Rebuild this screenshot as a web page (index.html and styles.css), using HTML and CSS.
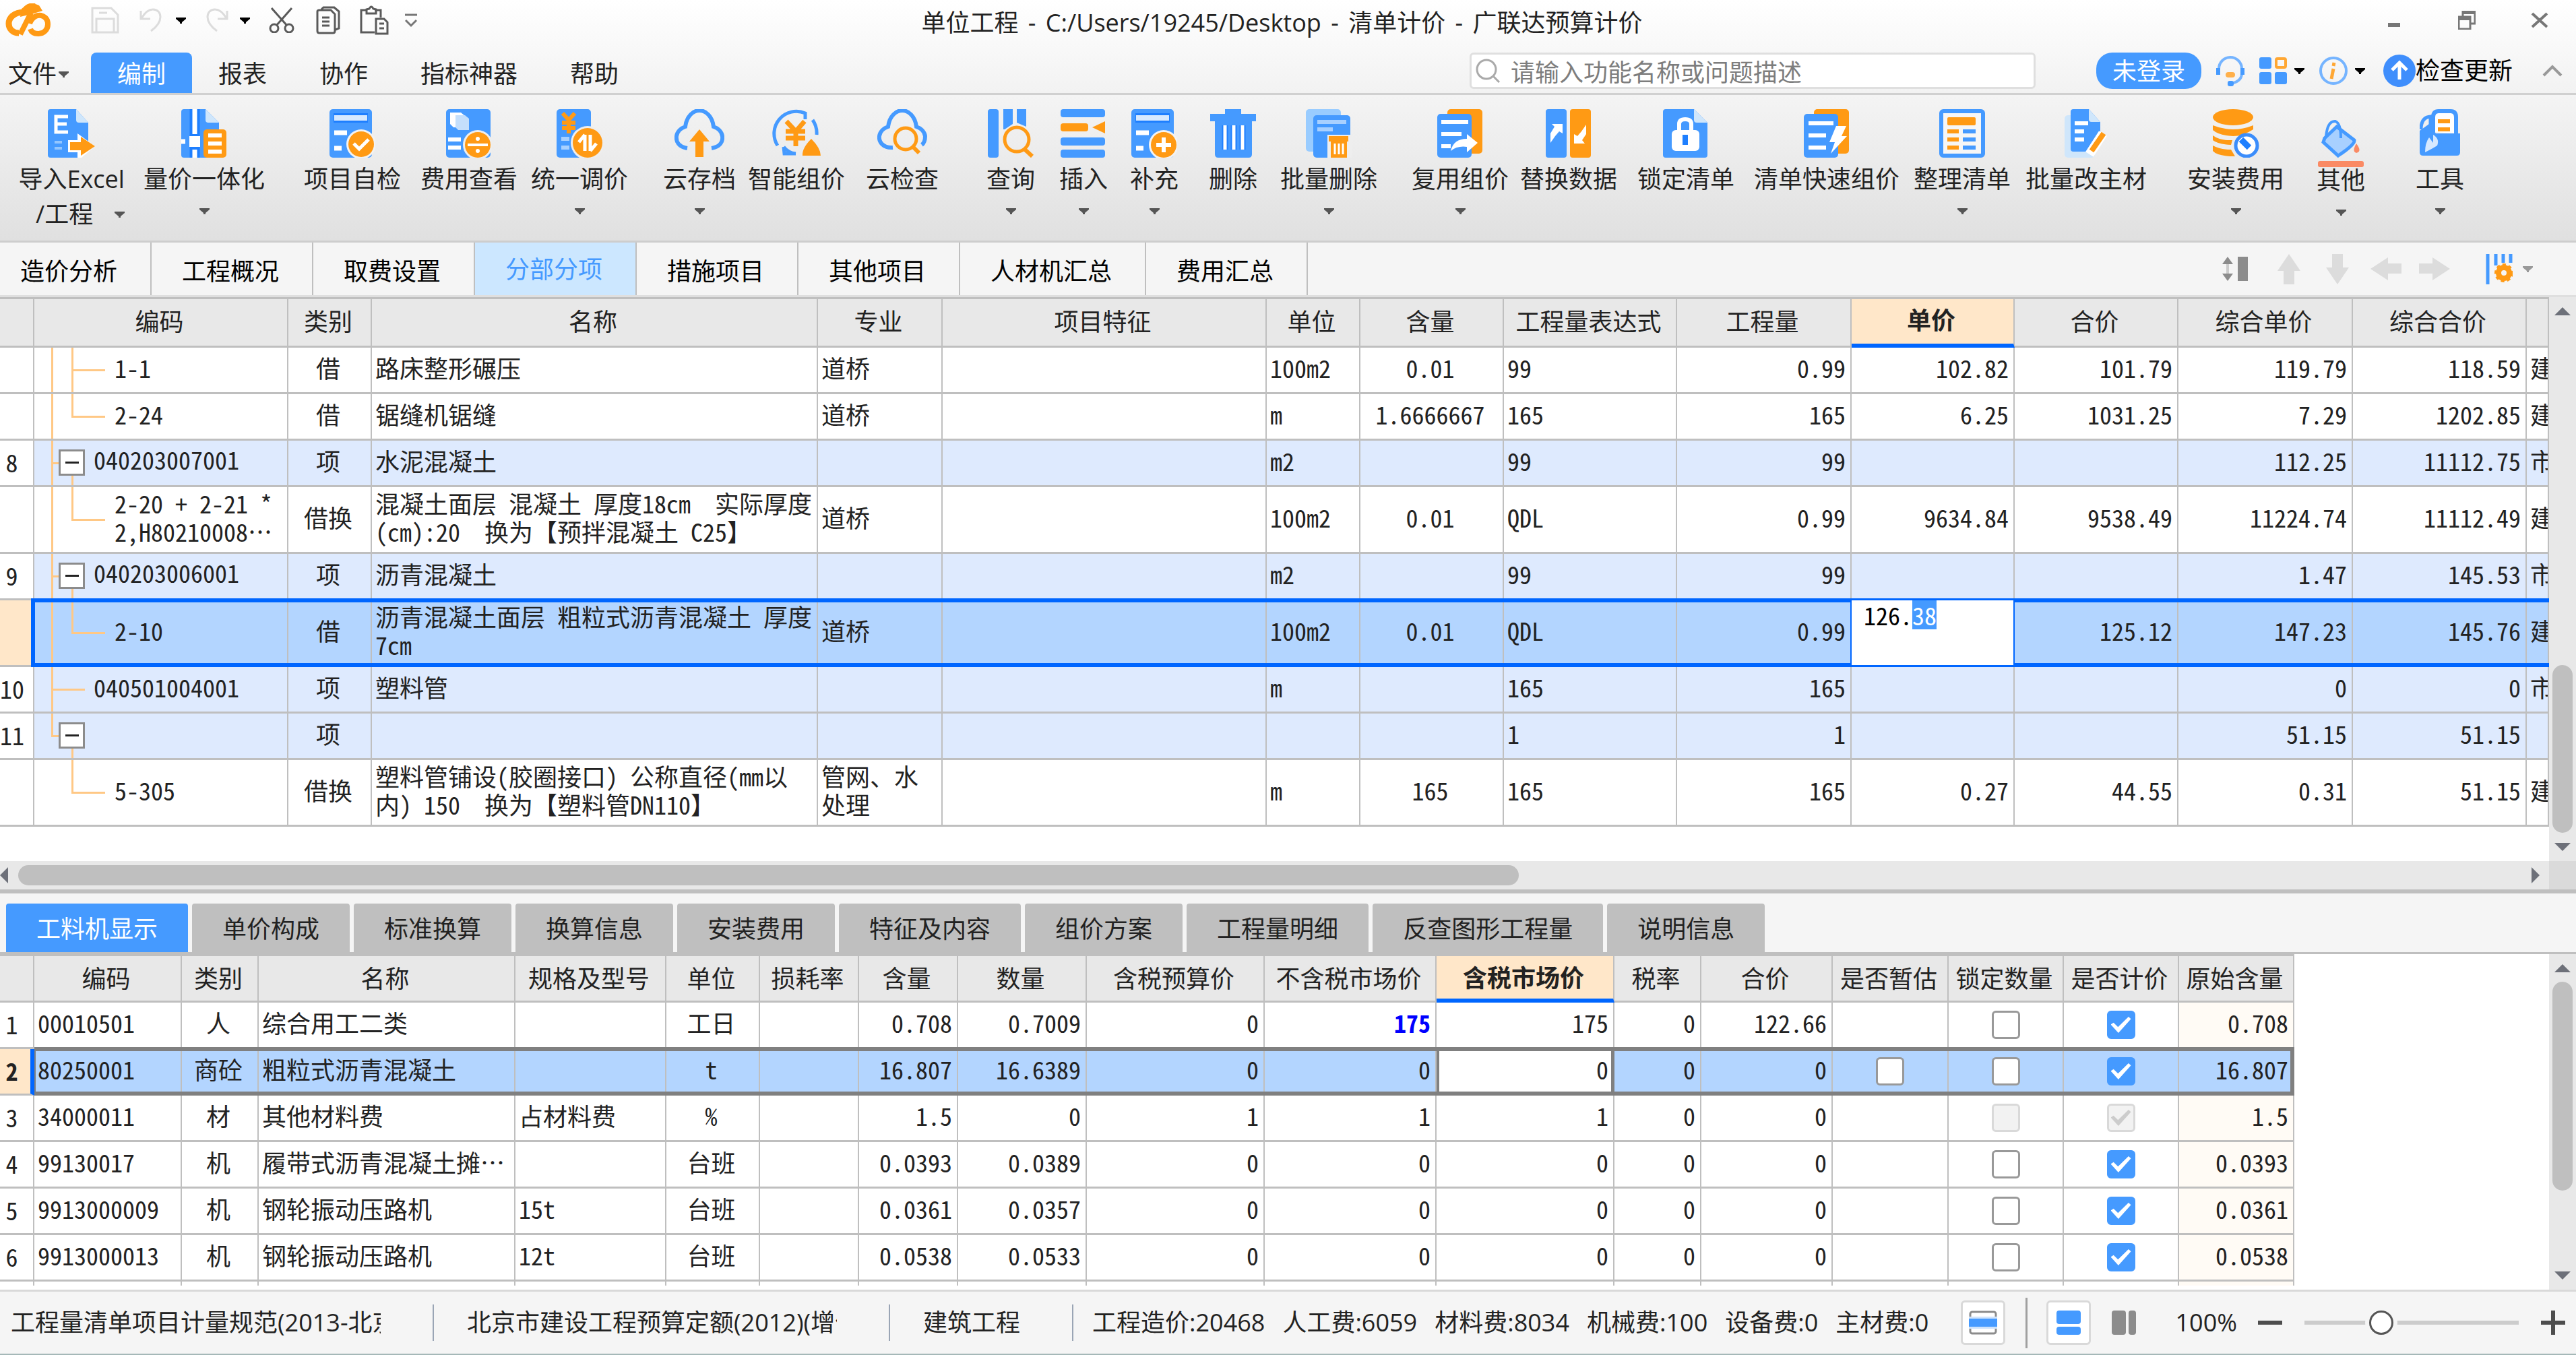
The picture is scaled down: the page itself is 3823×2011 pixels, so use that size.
FILE: index.html
```html
<!DOCTYPE html>
<html lang="zh-CN">
<head>
<meta charset="utf-8">
<title>单位工程 - 清单计价 - 广联达预算计价</title>
<meta name="viewport" content="width=device-width, initial-scale=1">
<link rel="stylesheet" href="styles.css">
<script src="editor.js" defer></script>
</head>
<body>
<svg class="defs" aria-hidden="true">
  <symbol id="caret" viewBox="0 0 15 9"><path d="M0 0H15V2L9 7V9H6V7L0 2Z" fill="currentColor"/></symbol>
  <symbol id="tri" viewBox="0 0 24 12"><path d="M12 0L24 12H0Z" fill="#6d7079"/></symbol>
</svg>

<header class="top">
  <div class="titlebar">
    <div class="quick">
      <svg width="68" height="50" viewBox="0 0 68 50"><g fill="none" stroke="#ff9a14" stroke-width="9"><path d="M44 4C34 3 30 8 28 13C12 13 5 22 5 30C5 38 11 44 20 44"/><path d="M38 14L22 46" stroke-width="8"/><path d="M36 30C40 19 48 17 53 18C60 20 63 25 63 31C63 39 57 45 49 45C41 45 38 41 37 38" stroke-width="8"/></g><path d="M24 8Q38-4 50 3L55 11L42 15L22 20Z" fill="#ff9a14"/></svg>
      <button title="保存"><svg width="42" height="40" viewBox="0 0 42 40"><path d="M2 2H30L40 12V38H2ZM8 38V18H34V38M12 9H24" fill="none" stroke="#dcdcdc" stroke-width="3"/></svg></button>
      <button title="撤销"><svg width="33" height="36" viewBox="0 0 33 36"><path d="M2 4V16H16M3 15C9 5 14 2 20 2C27 2 31 7 31 13C31 22 24 29 17 34" fill="none" stroke="#dcdcdc" stroke-width="3"/></svg></button>
      <button title="撤销列表"><svg width="15" height="9"><use href="#caret"/></svg></button>
      <button title="恢复"><svg width="33" height="36" viewBox="0 0 33 36"><path d="M31 4V16H17M30 15C24 5 19 2 13 2C6 2 2 7 2 13C2 22 9 29 16 34" fill="none" stroke="#dcdcdc" stroke-width="3"/></svg></button>
      <button title="恢复列表"><svg width="15" height="9"><use href="#caret"/></svg></button>
      <button title="剪切"><svg width="38" height="38" viewBox="0 0 38 38"><g fill="none" stroke="#5a5a5a" stroke-width="3"><path d="M4 1L27 27M34 1L11 27"/><circle cx="8" cy="31" r="6"/><circle cx="30" cy="31" r="6"/></g></svg></button>
      <button title="复制"><svg width="36" height="42" viewBox="0 0 36 42"><g fill="none" stroke="#5a5a5a" stroke-width="3"><path d="M2 8Q2 6 5 6H22L28 12V37Q28 40 25 40H5Q2 40 2 37ZM8 5L11 2H27L34 8V33L29 35M9 17H20M9 23H20M9 29H20"/></g></svg></button>
      <button title="粘贴"><svg width="43" height="44" viewBox="0 0 43 44"><g fill="none" stroke="#5a5a5a" stroke-width="3"><path d="M10 7H2V40H22M22 7H31V18M10 12V6L14 5Q17-1 20 5L24 6V12ZM24 20H36L41 25V42H24ZM29 27H36M29 34H36"/></g></svg></button>
      <button title="更多"><svg width="20" height="21" viewBox="0 0 20 21"><path d="M1 2H19M2 10L10 18L18 10" fill="none" stroke="#777" stroke-width="3"/></svg></button>
    </div>
    <h1>单位工程 <span>-</span> C:/Users/19245/Desktop <span>-</span> 清单计价 <span>-</span> 广联达预算计价</h1>
    <div class="window">
      <button title="最小化"><svg width="26" height="28" viewBox="0 0 26 28"><path d="M4 18H22V24H4Z" fill="#777"/></svg></button>
      <button title="还原"><svg width="26" height="28" viewBox="0 0 26 28"><path d="M7 0H25V19H18M7 0V8M1 9H18V27H1Z" fill="none" stroke="#777" stroke-width="3"/><path d="M7 0H26V5H7ZM0 9H19V14H0Z" fill="#777"/></svg></button>
      <button title="关闭"><svg width="26" height="28" viewBox="0 0 26 28"><path d="M2 4L24 24M24 4L2 24" fill="none" stroke="#777" stroke-width="4"/></svg></button>
    </div>
  </div>
  <div class="menubar">
    <nav>
      <button class="file">文件<svg width="15" height="9"><use href="#caret"/></svg></button>
      <button class="on">编制</button><button>报表</button><button>协作</button><button>指标神器</button><button>帮助</button>
    </nav>
    <label class="search"><svg width="36" height="36" viewBox="0 0 36 36"><g fill="none" stroke="#aaa" stroke-width="3"><circle cx="16" cy="16" r="14"/><path d="M26 26L35 35"/></g></svg><input type="text" placeholder="请输入功能名称或问题描述" aria-label="搜索"></label>
    <div class="account">
      <button class="login">未登录</button>
      <button title="客服"><svg width="42" height="46" viewBox="0 0 42 46"><g fill="none" stroke="#459aff" stroke-width="4"><path d="M4 28V20A17 17 0 0 1 38 20V28Q37 39 22 42" stroke="#75b4ff"/><path d="M3 19V29M39 19V29" stroke-width="6"/></g><rect x="14" y="25" width="14" height="8" rx="4" fill="#ffb04a"/><rect x="17" y="38" width="9" height="8" rx="3" fill="#459aff"/></svg></button>
      <button title="应用" class="drop"><svg width="41" height="40" viewBox="0 0 41 40"><g fill="#459aff"><rect width="18" height="17" rx="3"/><rect y="22" width="18" height="18" rx="3"/><rect x="23" y="22" width="18" height="18" rx="3"/></g><rect x="25" y="2" width="14" height="13" rx="2" fill="none" stroke="#ffa733" stroke-width="4"/></svg><svg width="15" height="9"><use href="#caret"/></svg></button>
      <button title="信息" class="drop"><svg width="42" height="46" viewBox="0 0 42 46"><circle cx="21" cy="23" r="19" fill="none" stroke="#75b4ff" stroke-width="4"/><path d="M22 11L21 16M21 20L18 35" stroke="#ffa733" stroke-width="5"/></svg><svg width="15" height="9"><use href="#caret"/></svg></button>
      <button class="update"><svg width="48" height="48" viewBox="0 0 48 48"><circle cx="24" cy="24" r="24" fill="#3f8efc"/><path d="M24 37V14M13 23L24 12L35 23" fill="none" stroke="#fff" stroke-width="5"/></svg>检查更新</button>
      <button title="收起" class="fold"><svg width="30" height="18" viewBox="0 0 30 18"><path d="M2 16L15 3L28 16" fill="none" stroke="#999" stroke-width="4"/></svg></button>
    </div>
  </div>
</header>

<div class="ribbon">
  <button><svg width="70" height="72" viewBox="0 0 70 72"><path d="M0 4Q0 0 4 0H42L60 20V50L45 72H4Q0 72 0 68Z" fill="#459aff"/><path d="M42 0L60 20H46Q42 20 42 16Z" fill="#cfe6fb"/><path d="M30 11H12V34H30M12 22H28" fill="none" stroke="#fff" stroke-width="5"/><path d="M10 49H21M10 58H21" stroke="#94c6ff" stroke-width="4"/><path d="M30 46H44V36L70 55L50 72H44V64H30Z" fill="#fff"/><path d="M33 49H49V41L70 55L49 69V61H33Z" fill="#ff9a14"/></svg><span>导入Excel</span><span class="second">/工程 <svg width="15" height="9"><use href="#caret"/></svg></span></button>
  <button><svg width="68" height="72" viewBox="0 0 68 72"><path d="M0 4Q0 0 4 0H36L56 20V72H4Q0 72 0 68Z" fill="#459aff"/><path d="M36 0L56 20H40Q36 20 36 16Z" fill="#cfe6fb"/><path d="M20 0V72" stroke="#1e7fff" stroke-width="15"/><path d="M20 0V37M20 60V72M0 48H6" stroke="#fff" stroke-width="7"/><rect x="12" y="40" width="16" height="16" fill="#fff"/><rect x="33" y="30" width="34" height="42" rx="5" fill="#ff9a14"/><path d="M40 39H60M40 51H60M40 63H60" stroke="#fff" stroke-width="6"/></svg><span>量价一体化</span><svg width="15" height="9"><use href="#caret"/></svg></button>
  <button><svg width="68" height="72" viewBox="0 0 68 72"><rect width="63" height="72" rx="5" fill="#459aff"/><path d="M6 13H57" stroke="#1e7fff" stroke-width="14"/><path d="M7 13H56" stroke="#d6e9ff" stroke-width="8"/><path d="M7 35H26M7 58H18" stroke="#fff" stroke-width="7"/><circle cx="47" cy="52" r="22" fill="#f3f3f3"/><circle cx="47" cy="52" r="19" fill="#ff9a14"/><path d="M36 51L44 59L58 45" fill="none" stroke="#fff" stroke-width="5"/></svg><span>项目自检</span></button>
  <button><svg width="68" height="72" viewBox="0 0 68 72"><rect width="66" height="72" rx="5" fill="#459aff"/><path d="M6 5H22L28 10V27H11L6 22Z" fill="#fff"/><path d="M14 9H28L34 14V31H18L14 27Z" fill="#c4dffc"/><path d="M3 45H22M3 57H22" stroke="#fff" stroke-width="6"/><circle cx="47" cy="53" r="22" fill="#eee"/><circle cx="47" cy="53" r="19" fill="#ff9a14"/><path d="M32 53H62" stroke="#fff" stroke-width="4"/><circle cx="47" cy="44" r="3" fill="#fff"/><circle cx="47" cy="62" r="3" fill="#fff"/></svg><span>费用查看</span></button>
  <button><svg width="68" height="72" viewBox="0 0 68 72"><rect width="51" height="72" rx="5" fill="#459aff"/><path d="M9 6L18 16L27 6M18 16V36M8 20H28M8 28H28" fill="none" stroke="#ff9a14" stroke-width="6"/><path d="M7 44H19M7 57H19" stroke="#a8d0ff" stroke-width="6"/><circle cx="46" cy="50" r="25" fill="#eee"/><circle cx="46" cy="50" r="22" fill="#ff9a14"/><path d="M42 38V62M42 38L33 49M50 62V38M50 62L59 51" fill="none" stroke="#fff" stroke-width="5"/></svg><span>统一调价</span><svg width="15" height="9"><use href="#caret"/></svg></button>
  <button><svg width="74" height="72" viewBox="0 0 74 72"><path d="M19 58C6 56 2 48 3 40C4 33 10 28 16 26C18 10 28 2 37 2S56 10 58 26C64 28 70 33 71 40C72 48 68 56 55 58" fill="none" stroke="#459aff" stroke-width="6"/><path d="M37 30L52 48H43V71H31V48H22Z" fill="#ff9a14"/></svg><span>云存档</span><svg width="15" height="9"><use href="#caret"/></svg></button>
  <button><svg width="74" height="72" viewBox="0 0 74 72"><g fill="none" stroke="#459aff" stroke-width="5"><path d="M9 54A33 33 0 0 1 50 6L50 15M61 16A34 34 0 0 1 67 38M18 56L19 66H36M18 56Q25 65 36 66"/></g><path d="M22 18L36 33L49 18M36 33V55M21 33H50M21 43H50" fill="none" stroke="#ff9a14" stroke-width="7"/><path d="M59 44Q73 58 73 69H46Q45 58 59 44Z" fill="#ff9a14"/></svg><span>智能组价</span></button>
  <button><svg width="74" height="72" viewBox="0 0 74 72"><path d="M23 57C8 58 2 48 3 40C4 33 10 28 16 26C18 10 28 2 37 2S56 10 58 26C64 28 70 33 71 40C71 46 70 50 66 53" fill="none" stroke="#459aff" stroke-width="6"/><circle cx="42" cy="44" r="16" fill="none" stroke="#ff9a14" stroke-width="5"/><path d="M52 55L62 65" stroke="#ff9a14" stroke-width="6"/></svg><span>云检查</span></button>
  <button><svg width="68" height="72" viewBox="0 0 68 72"><g fill="#459aff"><rect width="16" height="72" rx="4"/><path d="M23 0H37V22L25 30H23ZM43 0H57V26L43 20Z"/></g><circle cx="43" cy="45" r="18" fill="none" stroke="#ff9a14" stroke-width="5"/><path d="M54 59L66 70" stroke="#ff9a14" stroke-width="6"/></svg><span>查询</span><svg width="15" height="9"><use href="#caret"/></svg></button>
  <button><svg width="68" height="72" viewBox="0 0 68 72"><g fill="#459aff"><rect width="66" height="12" rx="4"/><rect y="42" width="66" height="12" rx="4"/><rect y="60" width="66" height="12" rx="4"/></g><rect y="21" width="41" height="12" rx="4" fill="#ff9a14"/><path d="M66 18V36L47 27Z" fill="#ff9a14"/></svg><span>插入</span><svg width="15" height="9"><use href="#caret"/></svg></button>
  <button><svg width="68" height="72" viewBox="0 0 68 72"><rect width="63" height="72" rx="5" fill="#459aff"/><path d="M6 13H57" stroke="#1e7fff" stroke-width="14"/><path d="M7 13H56" stroke="#d6e9ff" stroke-width="8"/><path d="M7 35H26M7 58H18" stroke="#fff" stroke-width="7"/><circle cx="48" cy="53" r="22" fill="#f3f3f3"/><circle cx="48" cy="53" r="19" fill="#ff9a14"/><path d="M48 42V64M37 53H59" stroke="#fff" stroke-width="6"/></svg><span>补充</span><svg width="15" height="9"><use href="#caret"/></svg></button>
  <button><svg width="68" height="72" viewBox="0 0 68 72"><path d="M0 7H22V0H46V7H68V18H62V67Q62 72 57 72H12Q7 72 7 67V18H0Z" fill="#459aff"/><path d="M22 24V60M35 24V60M48 24V60" stroke="#1e7fff" stroke-width="9"/><path d="M22 24V60M35 24V60M48 24V60" stroke="#fff" stroke-width="5"/></svg><span>删除</span></button>
  <button><svg width="68" height="72" viewBox="0 0 68 72"><rect width="52" height="63" rx="5" fill="#99ccff"/><rect x="11" y="9" width="55" height="63" rx="5" fill="#459aff"/><path d="M17 19H60M17 30H40" stroke="#a8d0ff" stroke-width="6"/><path d="M32 38H68V72H32Z" fill="#eee"/><path d="M34 40H63V48H61V72H37V48H34Z" fill="#ff9a14"/><path d="M43 51V67M49 51V67M55 51V67" stroke="#fff" stroke-width="3"/></svg><span>批量删除</span><svg width="15" height="9"><use href="#caret"/></svg></button>
  <button><svg width="68" height="72" viewBox="0 0 68 72"><rect x="15" width="52" height="66" rx="5" fill="#ff9a14"/><rect y="7" width="51" height="65" rx="5" fill="#459aff"/><path d="M6 19H46M6 37H36M6 55H20" stroke="#fff" stroke-width="6"/><path d="M20 62Q24 44 44 44V37L60 50L44 64V56Q30 54 20 62Z" fill="#fff"/></svg><span>复用组价</span><svg width="15" height="9"><use href="#caret"/></svg></button>
  <button><svg width="68" height="72" viewBox="0 0 68 72"><rect width="31" height="72" rx="4" fill="#459aff"/><rect x="36" width="31" height="72" rx="4" fill="#ff9a14"/><path d="M7 50V36L13 26L9 22H25V36L20 33L14 40ZM60 23V37L54 46L58 51H42V37L47 40L53 33Z" fill="#fff"/></svg><span>替换数据</span></button>
  <button><svg width="68" height="72" viewBox="0 0 68 72"><path d="M0 4Q0 0 4 0H46L66 20V68Q66 72 62 72H4Q0 72 0 68Z" fill="#459aff"/><path d="M46 0L66 20H50Q46 20 46 16Z" fill="#cfe6fb"/><path d="M24 34V22Q24 15 33 15T42 22V34" fill="none" stroke="#fff" stroke-width="6"/><rect x="13" y="31" width="41" height="31" rx="6" fill="#fff"/><path d="M33 38V53" stroke="#1e7fff" stroke-width="8"/></svg><span>锁定清单</span></button>
  <button><svg width="68" height="72" viewBox="0 0 68 72"><rect x="15" width="52" height="66" rx="5" fill="#ff9a14"/><rect y="7" width="51" height="65" rx="5" fill="#459aff"/><path d="M7 21H44M7 39H33M7 57H33" stroke="#fff" stroke-width="6"/><path d="M48 25H63L56 40H64L40 66L46 49H38Z" fill="#fff"/></svg><span>清单快速组价</span></button>
  <button><svg width="68" height="72" viewBox="0 0 68 72"><rect x="3" y="3" width="62" height="66" rx="3" fill="#f6f6f6" stroke="#459aff" stroke-width="6"/><rect x="12" y="12" width="42" height="12" rx="2" fill="#ff9a14"/><path d="M12 33H29M12 45H29M12 57H29" stroke="#ff9a14" stroke-width="6"/><path d="M35 33H54M35 45H54M35 57H54" stroke="#459aff" stroke-width="6"/></svg><span>整理清单</span><svg width="15" height="9"><use href="#caret"/></svg></button>
  <button><svg width="64" height="72" viewBox="0 0 64 72"><rect y="9" width="45" height="63" rx="5" fill="#cfe6fb"/><path d="M9 4Q9 0 13 0H36L53 19V36L36 63H13Q9 63 9 59Z" fill="#459aff"/><path d="M36 0L53 19H40Q36 19 36 15Z" fill="#cfe6fb"/><path d="M15 21H35M15 33H29M15 45H29" stroke="#fff" stroke-width="6"/><path d="M37 67L57 36" stroke="#fff" stroke-width="14"/><path d="M40 62L58 36" stroke="#ff9a14" stroke-width="8"/></svg><span>批量改主材</span></button>
  <button><svg width="70" height="72" viewBox="0 0 70 72"><g fill="#ff9a14"><ellipse cx="31" cy="12" rx="30" ry="12"/><path d="M1 24Q31 36 61 24V30Q46 40 31 40Q10 39 1 31ZM1 39Q12 47 30 46L28 53Q8 52 1 46ZM1 54Q12 60 28 60L34 70Q8 70 1 62Z"/></g><circle cx="51" cy="54" r="16" fill="#fff" stroke="#3b8dfb" stroke-width="5"/><path d="M43 45L55 57" stroke="#1e7fff" stroke-width="9"/></svg><span>安装费用</span><svg width="15" height="9"><use href="#caret"/></svg></button>
  <button class="other"><svg width="68" height="72" viewBox="0 0 68 72"><path d="M10 28L28 11L54 31Q56 37 30 54L8 34Z" fill="#a8d0ff" stroke="#459aff" stroke-width="5"/><path d="M12 26Q14 2 26 3Q34 6 34 28" fill="none" stroke="#459aff" stroke-width="4"/><path d="M57 36Q66 48 57 50Q50 48 57 36Z" fill="#fa8a64"/><rect y="62" width="68" height="9" rx="3" fill="#fa8a64"/></svg><span>其他</span><svg width="15" height="9"><use href="#caret"/></svg></button>
  <button><svg width="60" height="72" viewBox="0 0 60 72"><path d="M2 30Q2 12 16 11V30" fill="none" stroke="#459aff" stroke-width="5"/><path d="M20 34V12Q20 3 28 3H46Q54 3 54 12V36" fill="#fff" stroke="#459aff" stroke-width="6"/><path d="M27 18H45M27 30H45" stroke="#ff9a14" stroke-width="6"/><path d="M0 32L14 22L24 36H60V64Q60 69 55 69H5Q0 69 0 64Z" fill="#459aff"/><path d="M8 64Q8 50 14 42L20 50V38Q30 44 26 54Q20 58 8 64Z" fill="#d6e9ff"/></svg><span>工具</span><svg width="15" height="9"><use href="#caret"/></svg></button>
</div>

<div class="pages">
  <nav><button>造价分析</button><button>工程概况</button><button>取费设置</button><button class="on">分部分项</button><button>措施项目</button><button>其他项目</button><button>人材机汇总</button><button>费用汇总</button></nav>
  <div class="tools">
    <button title="行高" class="rowheight"><svg width="38" height="36" viewBox="0 0 38 36"><path d="M8 0L16 11H0ZM8 36L16 25H0ZM23 0H38V36H23Z" fill="#8c8c8c"/><path d="M8 11V25" stroke="#ccc" stroke-width="4"/></svg></button>
    <button title="上移"><svg width="34" height="45" viewBox="0 0 34 45"><path d="M17 0L34 25H25V45H9V25H0Z" fill="#dcdcdc"/></svg></button>
    <button title="下移"><svg width="34" height="45" viewBox="0 0 34 45"><path d="M17 45L34 20H25V0H9V20H0Z" fill="#dcdcdc"/></svg></button>
    <button title="左移"><svg width="46" height="34" viewBox="0 0 46 34"><path d="M0 17L26 0V9H46V24H26V34Z" fill="#dcdcdc"/></svg></button>
    <button title="右移"><svg width="46" height="34" viewBox="0 0 46 34"><path d="M46 17L20 0V9H0V24H20V34Z" fill="#dcdcdc"/></svg></button>
    <button title="列设置" class="columns"><svg width="40" height="45" viewBox="0 0 40 45"><path d="M3 0V45M15 0V17M26 0V13M37 0V13" stroke="#459aff" stroke-width="5"/><circle cx="27" cy="28" r="8" fill="none" stroke="#ff9a14" stroke-width="8"/><circle cx="27" cy="28" r="12" fill="none" stroke="#ff9a14" stroke-width="4" stroke-dasharray="5 4"/></svg><svg width="15" height="9"><use href="#caret"/></svg></button>
  </div>
</div>

<main>
<section class="bill">
  <div class="view">
  <div class="sheet">
  <table>
    <colgroup><col style="width:51px"><col style="width:377px"><col style="width:124px"><col style="width:662px"><col style="width:185px"><col style="width:481px"><col style="width:139px"><col style="width:213px"><col style="width:257px"><col style="width:259px"><col style="width:242px"><col style="width:243px"><col style="width:259px"><col style="width:258px"><col></colgroup>
    <thead><tr><th></th><th>编码</th><th>类别</th><th>名称</th><th>专业</th><th>项目特征</th><th>单位</th><th>含量</th><th>工程量表达式</th><th>工程量</th><th class="cur">单价</th><th>合价</th><th>综合单价</th><th>综合合价</th><th></th></tr></thead>
    <tbody>
      <tr><td class="no"></td><td class="kid mid">1-1</td><td class="c">借</td><td>路床整形碾压</td><td>道桥</td><td></td><td>100m2</td><td class="c">0.01</td><td>99</td><td class="r">0.99</td><td class="r">102.82</td><td class="r">101.79</td><td class="r">119.79</td><td class="r">118.59</td><td>建</td></tr>
      <tr><td class="no"></td><td class="kid">2-24</td><td class="c">借</td><td>锯缝机锯缝</td><td>道桥</td><td></td><td>m</td><td class="c">1.6666667</td><td>165</td><td class="r">165</td><td class="r">6.25</td><td class="r">1031.25</td><td class="r">7.29</td><td class="r">1202.85</td><td>建</td></tr>
      <tr class="item"><td class="no">8</td><td class="node"><button class="toggle" aria-label="折叠"></button>040203007001</td><td class="c">项</td><td>水泥混凝土</td><td></td><td></td><td>m2</td><td></td><td>99</td><td class="r">99</td><td></td><td></td><td class="r">112.25</td><td class="r">11112.75</td><td>市</td></tr>
      <tr class="tall"><td class="no"></td><td class="kid">2-20 + 2-21 *<br>2,H80210008…</td><td class="c">借换</td><td>混凝土面层 混凝土 厚度18cm&nbsp; 实际厚度<br>(cm):20&nbsp; 换为【预拌混凝土 C25】</td><td>道桥</td><td></td><td>100m2</td><td class="c">0.01</td><td>QDL</td><td class="r">0.99</td><td class="r">9634.84</td><td class="r">9538.49</td><td class="r">11224.74</td><td class="r">11112.49</td><td>建</td></tr>
      <tr class="item"><td class="no">9</td><td class="node"><button class="toggle" aria-label="折叠"></button>040203006001</td><td class="c">项</td><td>沥青混凝土</td><td></td><td></td><td>m2</td><td></td><td>99</td><td class="r">99</td><td></td><td></td><td class="r">1.47</td><td class="r">145.53</td><td>市</td></tr>
      <tr class="tall sel"><td class="no"></td><td class="kid"><span class="frame"></span>2-10</td><td class="c">借</td><td>沥青混凝土面层 粗粒式沥青混凝土 厚度<br>7cm</td><td>道桥</td><td></td><td>100m2</td><td class="c">0.01</td><td>QDL</td><td class="r">0.99</td><td class="edit"><input id="price" type="text" value="126.38" aria-label="单价"></td><td class="r">125.12</td><td class="r">147.23</td><td class="r">145.76</td><td>建</td></tr>
      <tr class="item"><td class="no">10</td><td class="leaf">040501004001</td><td class="c">项</td><td>塑料管</td><td></td><td></td><td>m</td><td></td><td>165</td><td class="r">165</td><td></td><td></td><td class="r">0</td><td class="r">0</td><td>市</td></tr>
      <tr class="item"><td class="no">11</td><td class="node last"><button class="toggle" aria-label="折叠"></button></td><td class="c">项</td><td></td><td></td><td></td><td></td><td></td><td>1</td><td class="r">1</td><td></td><td></td><td class="r">51.15</td><td class="r">51.15</td><td></td></tr>
      <tr class="tall"><td class="no"></td><td class="kid last">5-305</td><td class="c">借换</td><td>塑料管铺设(胶圈接口) 公称直径(mm以<br>内) 150&nbsp; 换为【塑料管DN110】</td><td>管网、水<br>处理</td><td></td><td>m</td><td class="c">165</td><td>165</td><td class="r">165</td><td class="r">0.27</td><td class="r">44.55</td><td class="r">0.31</td><td class="r">51.15</td><td>建</td></tr>
    </tbody>
  </table>
  </div>
  <div class="hbar"><svg width="12" height="24" viewBox="0 0 12 24"><path d="M12 0V24L0 12Z" fill="#6d7079"/></svg><i class="thumb"></i><i class="rest"></i><svg width="12" height="24" viewBox="0 0 12 24"><path d="M0 0V24L12 12Z" fill="#6d7079"/></svg></div>
  </div>
  <div class="vbar"><div class="track"><svg width="24" height="12"><use href="#tri"/></svg><i class="before"></i><i class="thumb"></i><svg class="down" width="24" height="12"><use href="#tri"/></svg></div><div class="corner"></div></div>
</section>

<section class="detail">
  <nav><button class="on">工料机显示</button><button>单价构成</button><button>标准换算</button><button>换算信息</button><button>安装费用</button><button>特征及内容</button><button>组价方案</button><button>工程量明细</button><button>反查图形工程量</button><button>说明信息</button></nav>
  <div class="pane">
  <div class="sheet">
  <table>
    <colgroup><col style="width:51px"><col style="width:219px"><col style="width:114px"><col style="width:381px"><col style="width:224px"><col style="width:139px"><col style="width:147px"><col style="width:147px"><col style="width:191px"><col style="width:264px"><col style="width:255px"><col style="width:264px"><col style="width:129px"><col style="width:195px"><col style="width:172px"><col style="width:171px"><col style="width:171px"><col style="width:171px"></colgroup>
    <thead><tr><th></th><th>编码</th><th>类别</th><th>名称</th><th>规格及型号</th><th>单位</th><th>损耗率</th><th>含量</th><th>数量</th><th>含税预算价</th><th>不含税市场价</th><th class="cur">含税市场价</th><th>税率</th><th>合价</th><th>是否暂估</th><th>锁定数量</th><th>是否计价</th><th>原始含量</th></tr></thead>
    <tbody>
      <tr><td class="no">1</td><td>00010501</td><td class="c">人</td><td>综合用工二类</td><td></td><td class="c">工日</td><td></td><td class="r">0.708</td><td class="r">0.7009</td><td class="r">0</td><td class="r changed">175</td><td class="r">175</td><td class="r">0</td><td class="r">122.66</td><td></td><td class="c"><input type="checkbox" aria-label="锁定数量"></td><td class="c"><input type="checkbox" aria-label="是否计价" checked></td><td class="r orig">0.708</td></tr>
      <tr class="sel"><td class="no">2</td><td><span class="frame"></span>80250001</td><td class="c">商砼</td><td>粗粒式沥青混凝土</td><td></td><td class="c">t</td><td></td><td class="r">16.807</td><td class="r">16.6389</td><td class="r">0</td><td class="r">0</td><td class="r active">0</td><td class="r">0</td><td class="r">0</td><td class="c"><input type="checkbox" aria-label="是否暂估"></td><td class="c"><input type="checkbox" aria-label="锁定数量"></td><td class="c"><input type="checkbox" aria-label="是否计价" checked></td><td class="r orig">16.807</td></tr>
      <tr><td class="no">3</td><td>34000011</td><td class="c">材</td><td>其他材料费</td><td>占材料费</td><td class="c">%</td><td></td><td class="r">1.5</td><td class="r">0</td><td class="r">1</td><td class="r">1</td><td class="r">1</td><td class="r">0</td><td class="r">0</td><td></td><td class="c"><input type="checkbox" aria-label="锁定数量" disabled></td><td class="c"><input type="checkbox" aria-label="是否计价" checked disabled></td><td class="r orig">1.5</td></tr>
      <tr><td class="no">4</td><td>99130017</td><td class="c">机</td><td>履带式沥青混凝土摊…</td><td></td><td class="c">台班</td><td></td><td class="r">0.0393</td><td class="r">0.0389</td><td class="r">0</td><td class="r">0</td><td class="r">0</td><td class="r">0</td><td class="r">0</td><td></td><td class="c"><input type="checkbox" aria-label="锁定数量"></td><td class="c"><input type="checkbox" aria-label="是否计价" checked></td><td class="r orig">0.0393</td></tr>
      <tr><td class="no">5</td><td>9913000009</td><td class="c">机</td><td>钢轮振动压路机</td><td>15t</td><td class="c">台班</td><td></td><td class="r">0.0361</td><td class="r">0.0357</td><td class="r">0</td><td class="r">0</td><td class="r">0</td><td class="r">0</td><td class="r">0</td><td></td><td class="c"><input type="checkbox" aria-label="锁定数量"></td><td class="c"><input type="checkbox" aria-label="是否计价" checked></td><td class="r orig">0.0361</td></tr>
      <tr><td class="no">6</td><td>9913000013</td><td class="c">机</td><td>钢轮振动压路机</td><td>12t</td><td class="c">台班</td><td></td><td class="r">0.0538</td><td class="r">0.0533</td><td class="r">0</td><td class="r">0</td><td class="r">0</td><td class="r">0</td><td class="r">0</td><td></td><td class="c"><input type="checkbox" aria-label="锁定数量"></td><td class="c"><input type="checkbox" aria-label="是否计价" checked></td><td class="r orig">0.0538</td></tr>
      <tr class="peek"><td class="no"></td><td></td><td></td><td></td><td></td><td></td><td></td><td></td><td></td><td></td><td></td><td></td><td></td><td></td><td></td><td></td><td></td><td class="orig"></td></tr>
    </tbody>
  </table>
  </div>
  <div class="vbar"><div class="track"><svg width="24" height="12"><use href="#tri"/></svg><i class="before"></i><i class="thumb"></i><svg class="down" width="24" height="12"><use href="#tri"/></svg></div></div>
  </div>
</section>
</main>

<footer class="status">
  <div class="clip">工程量清单项目计量规范(2013-北京)</div>
  <i class="sep"></i>
  <div class="clip">北京市建设工程预算定额(2012)(增值税)</div>
  <i class="sep"></i>
  <div>建筑工程</div>
  <i class="sep"></i>
  <div class="sums"><span>工程造价:20468</span><span>人工费:6059</span><span>材料费:8034</span><span>机械费:100</span><span>设备费:0</span><span>主材费:0</span></div>
  <button class="box" title="显示"><svg width="42" height="36" viewBox="0 0 42 36"><rect x="2" y="2" width="38" height="32" rx="3" fill="#fff" stroke="#8c8c8c" stroke-width="3"/><path d="M0 18H42" stroke="#cfe3fb" stroke-width="18"/><path d="M0 18H42" stroke="#459aff" stroke-width="12"/></svg></button>
  <i class="rule"></i>
  <button class="box" title="上下布局"><svg width="36" height="36" viewBox="0 0 36 36"><rect width="36" height="20" rx="4" fill="#459aff"/><rect y="24" width="36" height="12" rx="4" fill="#459aff"/></svg></button>
  <button class="plain" title="左右布局"><svg width="36" height="36" viewBox="0 0 36 36"><rect width="21" height="36" rx="4" fill="#8c8c8c"/><rect x="25" width="11" height="36" rx="4" fill="#8c8c8c"/></svg></button>
  <output class="percent">100%</output>
  <button class="plain" title="缩小"><svg width="36" height="36" viewBox="0 0 36 36"><path d="M0 18H36" stroke="#4d4d4d" stroke-width="6"/></svg></button>
  <input class="zoom" type="range" min="0" max="100" value="34" aria-label="缩放">
  <button class="plain" title="放大"><svg width="36" height="36" viewBox="0 0 36 36"><path d="M0 18H36M18 0V36" stroke="#4d4d4d" stroke-width="6"/></svg></button>
</footer>
</body>
</html>
```
FILE: styles.css
```css
* { box-sizing: border-box; }
:root {
  --ui: "Open Sans", "Noto Sans CJK SC", sans-serif;
  --grid: "Noto Sans CJK SC", sans-serif;
  --line: #bfbfbf;
  --blue: #459aff;
  --focus: #06f;
}
body {
  margin: 0;
  min-height: 100vh;
  display: flex;
  flex-direction: column;
  overflow: hidden;
  font: 36px/48px var(--ui);
  color: #222;
  background: #f5f5f5;
}
.defs { display: none; }
svg { display: block; flex: none; }
button {
  padding: 0;
  border: 0;
  background: none;
  font: inherit;
  color: inherit;
  white-space: nowrap;
}
i { display: block; }

/* title and menu */
.top {
  background: linear-gradient(#fff, #f2f2f2);
  border-bottom: 3px solid #d0d0d0;
}
.titlebar {
  display: grid;
  grid-template-columns: 1fr auto 1fr;
  align-items: center;
  height: 60px;
}
.titlebar h1 {
  margin: 8px 18px 0 0;
  font-size: 36px;
  font-weight: 400;
}
.titlebar h1 span { margin: 0 5px; }
.quick {
  display: grid;
  grid-template-columns: 127px 72px 54px 45px 50px 43px 70px 65px 66px 20px;
  align-items: center;
  justify-items: start;
  padding-left: 8px;
  color: #000;
}
.window { display: flex; justify-content: flex-end; }
.window button { width: 108px; display: flex; justify-content: center; }
.menubar {
  display: flex;
  align-items: flex-end;
  height: 78px;
}
.menubar nav { display: flex; }
.menubar nav button { height: 60px; padding: 4px 39px 0; }
.menubar nav .file {
  display: flex;
  align-items: center;
  gap: 3px;
  width: 135px;
  padding: 4px 0 0 12px;
}
.file svg { color: #555; }
.menubar nav .on {
  background: var(--blue);
  color: #fff;
  border-radius: 8px 8px 0 0;
}
.search {
  display: flex;
  align-items: center;
  gap: 16px;
  width: 840px;
  height: 54px;
  margin: 0 90px 6px auto;
  padding-left: 6px;
  background: #fff;
  border: 3px solid #dfdfdf;
  border-radius: 6px;
}
.search input {
  flex: 1;
  min-width: 0;
  padding: 0;
  border: 0;
  outline: 0;
  background: none;
  font: 36px/48px var(--grid);
}
.search input::placeholder { color: #7d7d7d; }
.account {
  display: flex;
  align-items: center;
  height: 54px;
  margin: 0 20px 6px 0;
  gap: 22px;
  color: #000;
}
.login {
  width: 156px;
  height: 54px;
  padding-top: 2px;
  border-radius: 24px;
  background: var(--blue);
  color: #fff;
}
.drop { display: flex; align-items: center; gap: 11px; }
.update { display: flex; align-items: center; margin-left: 5px; }
.fold { margin-left: 22px; }

/* ribbon */
.ribbon {
  display: grid;
  grid-template-columns: 186px 238px 173px 164px 196px 126px 175px 179px 108px 105px 117px 106px 195px 161px 174px 173px 237px 166px 240px 192px 147px auto;
  justify-items: start;
  align-items: start;
  height: 219px;
  padding: 21px 0 0 27px;
  background: linear-gradient(#f4f4f4, #e0e0e0);
  border-bottom: 3px solid #cdcdcd;
}
.ribbon button {
  display: flex;
  flex-direction: column;
  align-items: center;
}
.ribbon button > span { margin-top: 8px; }
.ribbon button > span + svg { margin-top: 19px; color: #555; }
.ribbon .other svg:first-child { margin-top: 15px; }
.ribbon .other > span { margin-top: -5px; }
.ribbon button > .second {
  display: flex;
  align-items: center;
  gap: 32px;
  align-self: stretch;
  margin: 4px 0 0;
  padding-left: 26px;
}
.second svg { color: #555; }

/* page tabs */
.pages {
  display: flex;
  justify-content: space-between;
  height: 81px;
  background: #f5f5f5;
  border-bottom: 3px solid #dfdfdf;
}
.pages nav { display: flex; color: #000; }
.pages nav button {
  padding: 8px 49px 0 45px;
  border-right: 2px solid var(--line);
}
.pages nav button:first-child { padding-left: 30px; padding-right: 49px; }
.pages nav .on { padding-top: 2px; background: #cce7ff; color: var(--blue); }
.tools {
  display: flex;
  align-items: center;
  gap: 24px;
  padding-right: 64px;
}
.tools button { width: 48px; display: flex; align-items: center; justify-content: center; }
.tools .rowheight { margin-right: 8px; }
.tools .columns { width: auto; gap: 15px; margin-left: 28px; color: #999; }

/* grids */
main { flex: 1; display: flex; flex-direction: column; }
.sheet { flex: 1; min-width: 0; overflow: hidden; background: #fff; }
table {
  border-collapse: separate;
  border-spacing: 0;
  table-layout: fixed;
  font: 36px/42px var(--grid);
  font-feature-settings: "hwid";
  text-spacing-trim: space-all;
}
th {
  height: 69px;
  padding: 0 4px 4px 0;
  font-weight: 400;
  white-space: nowrap;
  background: #e8e8e8;
  border-right: 2px solid var(--line);
  border-bottom: 3px solid var(--line);
}
th.cur {
  font-weight: 700;
  background: #ffe7c9;
  border-bottom: 6px solid var(--focus);
}
td {
  height: 69px;
  padding: 0 7px 8px 5px;
  white-space: nowrap;
  overflow: hidden;
  border-right: 2px solid var(--line);
  border-bottom: 3px solid var(--line);
}
.c { text-align: center; padding: 0 4px 8px 0; }
.c:has(input) { padding: 0; }
.r { text-align: right; }
.no { padding: 0 14px 4px 0; text-align: center; }
.item td:not(.no) { background-color: #deeafe; }
.sel td:not(.no) { background-color: #b3d5ff; }
.sel .no { background: #ffe7c9; font-weight: 700; }
.frame {
  position: absolute;
  z-index: 1;
  top: -3px;
  bottom: -3px;
  left: -5px;
  width: 9999px;
  border: 6px solid var(--focus);
  pointer-events: none;
}
.sel td:nth-child(2) { position: relative; overflow: visible; }

.bill { flex: 1; display: flex; }
.view { flex: 1; min-width: 0; display: flex; flex-direction: column; }
.bill .sheet { border-top: 3px solid var(--line); }
.bill table { width: 100%; }
.bill th { height: 72px; padding-bottom: 8px; }
.tall td { height: 99px; }

/* tree lines: trunk, branch, twig */
.kid, .node, .leaf {
  background-image: linear-gradient(#ffc885, #ffc885), linear-gradient(#ffc885, #ffc885), linear-gradient(#ffc885, #ffc885);
  background-repeat: no-repeat;
}
.kid {
  padding-left: 119px;
  background-position: 25px 0, 55px 0, 55px 50%;
  background-size: 3px 100%, 3px 50%, 50px 3px;
}
.kid.mid { background-size: 3px 100%, 3px 100%, 50px 3px; }
.kid.last { background-size: 0 0, 3px 50%, 50px 3px; }
.node {
  padding-left: 36px;
  background-position: 25px 0, 55px 100%, 25px 50%;
  background-size: 3px 100%, 3px 50%, 11px 3px;
}
.node.last { background-size: 3px 50%, 3px 50%, 11px 3px; }
.leaf {
  padding-left: 88px;
  background-position: 25px 0, 0 0, 25px 50%;
  background-size: 3px 100%, 0 0, 50px 3px;
}
.toggle {
  width: 39px;
  height: 39px;
  margin-right: 13px;
  vertical-align: middle;
  border: 3px solid #8c8c8c;
  background: linear-gradient(#222, #222) center / 20px 3px no-repeat #fff;
}
.sel td.edit {
  position: relative;
  z-index: 2;
  padding: 0;
  vertical-align: top;
  background-color: #fff;
  border-color: var(--focus);
  box-shadow: -2px 0 var(--focus), 0 -2px var(--focus);
}
.edit input {
  display: block;
  width: 100%;
  height: 43px;
  padding: 0 0 0 18px;
  border: 0;
  outline: 0;
  background: none;
  font: 36px/43px var(--grid);
  font-feature-settings: "hwid";
  color: #000;
  caret-color: transparent;
}
.edit input::selection { background: var(--blue); color: #fff; }

/* scroll bars */
.hbar {
  display: flex;
  align-items: center;
  height: 42px;
  padding-right: 14px;
  background: #e8e8e8;
}
.thumb { background: var(--line); border-radius: 15px; }
.hbar .thumb { flex: 2226; height: 30px; margin-left: 15px; }
.hbar .rest { flex: 1503; }
.vbar { display: flex; flex-direction: column; width: 40px; background: #e8e8e8; }
.track {
  flex: 1;
  display: flex;
  flex-direction: column;
  align-items: center;
  padding: 15px 0;
}
.vbar .thumb { width: 30px; }
.down { margin-top: 15px; transform: rotate(180deg); }
.bill .before { flex: 522; }
.bill .vbar .thumb { flex: 251; }
.corner { height: 42px; background: #dadada; }

/* detail pane */
.detail { border-top: 6px solid var(--line); }
.detail nav {
  display: flex;
  gap: 6px;
  height: 90px;
  padding: 15px 9px 0;
  border-bottom: 3px solid var(--line);
}
.detail nav button {
  padding: 3px 45px 0;
  background: var(--line);
  border-radius: 4px 4px 0 0;
}
.detail nav .on { background: var(--blue); color: #fff; }
.pane { display: flex; }
.pane .sheet { padding-bottom: 6px; }
.pane table { width: 3405px; border-top: 3px solid var(--line); }
.pane .frame { left: 0; width: 3354px; border-color: #808080; border-left-width: 2px; }
.pane .sel .no { border-right: 6px solid var(--focus); padding-right: 10px; }
.pane .peek td { height: 6px; padding: 0; border-bottom: 0; }
td.changed { color: #00f; font-weight: 700; }
td.orig { background: #fffbf5; }
.sel td.active {
  background-color: #fff;
  border-right-color: #808080;
  box-shadow: inset 4px 0 #808080, inset -3px 0 #808080;
}
.pane .before { flex: 0 0 14px; }
.pane .vbar .thumb { flex: 310; }
.pane .down { margin-top: 120px; }

input[type="checkbox"] {
  appearance: none;
  display: block;
  width: 42px;
  height: 42px;
  margin: 0 auto;
  border: 3px solid #999;
  border-radius: 6px;
  background: #fff;
}
input[type="checkbox"]:checked { background: var(--blue); border-color: var(--blue); }
input[type="checkbox"]:checked::before {
  content: "";
  display: block;
  width: 30px;
  height: 24px;
  margin: 6px 3px;
  background: #fff;
  clip-path: polygon(0 48%, 14% 36%, 36% 64%, 88% 0, 100% 14%, 38% 100%);
}
input[type="checkbox"]:disabled { background: #f2f2f2; border-color: #d9d9d9; }
input[type="checkbox"]:disabled::before { background: #ccc; }

/* status bar */
.status {
  display: flex;
  align-items: center;
  height: 97px;
  padding: 0 16px;
  border-top: 3px solid #d9d9d9;
  border-bottom: 2px solid #a5b8b8;
  background: #f5f5f5;
  white-space: nowrap;
}
.clip { width: 549px; overflow: hidden; }
.sep { width: 2px; height: 54px; margin: 0 49px 0 77px; background: #9aa5b5; }
.sums { display: flex; gap: 26px; margin-left: -21px; }
.box {
  display: flex;
  align-items: center;
  justify-content: center;
  width: 66px;
  height: 66px;
  background: #fff;
  border: 3px solid #d9d9d9;
  border-radius: 6px;
}
.sums + .box { margin-left: auto; }
.rule { width: 3px; height: 75px; margin: 0 28px 0 30px; background: #a0a0a0; }
.plain { margin-left: 31px; }
.percent { margin-left: 58px; }
.zoom {
  appearance: none;
  width: 318px;
  height: 36px;
  margin: 0 2px 0 33px;
  background: linear-gradient(#ccc, #ccc) center / 100% 6px no-repeat;
}
.zoom::-webkit-slider-thumb {
  appearance: none;
  width: 36px;
  height: 36px;
  border: 3px solid #555;
  border-radius: 50%;
  background: #fff;
  box-shadow: 0 0 0 6px #f5f5f5;
}
```
FILE: editor.js
```js
// Put the price cell into edit mode with the decimals selected.
const price = document.getElementById("price");
price.focus();
price.setSelectionRange(4, 6);
```
